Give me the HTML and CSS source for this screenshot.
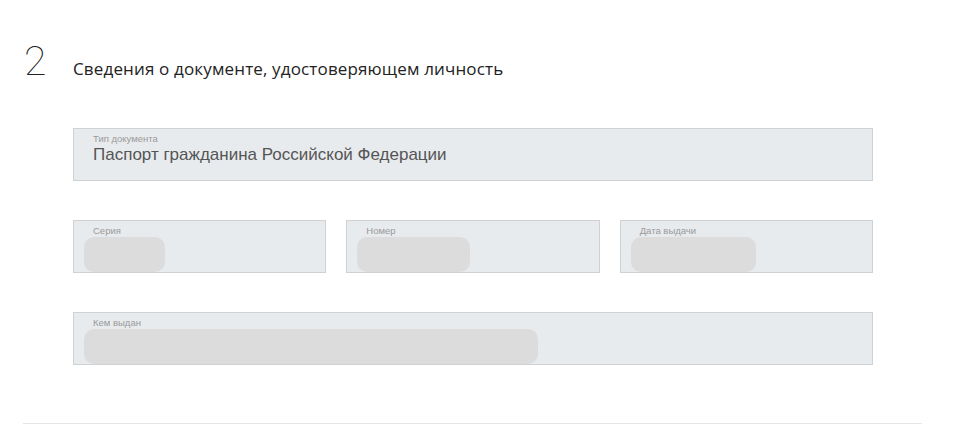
FILE: index.html
```html
<!DOCTYPE html>
<html lang="ru">
<head>
<meta charset="utf-8">
<link rel="stylesheet" href="styles.css">
</head>
<body>
<section class="step">
  <header class="step-head">
    <span class="step-num">2</span>
    <h2 class="step-title">Сведения о документе, удостоверяющем личность</h2>
  </header>
  <div class="form">
    <div class="field">
      <div class="field-label">Тип документа</div>
      <div class="field-value">Паспорт гражданина Российской Федерации</div>
    </div>
    <div class="row3">
      <div class="field">
        <div class="field-label">Серия</div>
        <div class="blob blob-s"></div>
      </div>
      <div class="field">
        <div class="field-label">Номер</div>
        <div class="blob blob-m"></div>
      </div>
      <div class="field">
        <div class="field-label">Дата выдачи</div>
        <div class="blob blob-l"></div>
      </div>
    </div>
    <div class="field">
      <div class="field-label">Кем выдан</div>
      <div class="blob blob-xl"></div>
    </div>
  </div>
  <div class="divider"></div>
</section>
</body>
</html>
```
FILE: styles.css
```css
html, body {
  margin: 0;
  padding: 0;
  background: #fff;
}
body {
  font-family: "Liberation Sans", Arial, sans-serif;
}
.step {
  padding: 40px 0 0 23px;
  width: 900px;
}
.step-head {
  display: flex;
  align-items: baseline;
  height: 42px;
}
.step-num {
  width: 50px;
  font-family: Roboto, "DejaVu Sans", sans-serif;
  font-weight: 100;
  font-size: 41px;
  line-height: 42px;
  color: #222;
  padding-left: 1px;
  box-sizing: border-box;
}
.step-title {
  margin: 0;
  font-family: "Open Sans", "Noto Sans", sans-serif;
  font-weight: 400;
  font-size: 17px;
  letter-spacing: 0.15px;
  color: #222;
}
.form {
  margin: 46px 0 0 50px;
  width: 800px;
  display: flex;
  flex-direction: column;
  gap: 39px;
}
.row3 {
  display: grid;
  grid-template-columns: 1fr 1fr 1fr;
  gap: 20px;
}
.field {
  height: 53px;
  box-sizing: border-box;
  background: #e8ebee;
  border: 1px solid #cfd1d3;
  padding: 4px 0 0 0;
}
.field-label {
  font-size: 9.5px;
  line-height: 12px;
  color: #999;
  padding-left: 19px;
}
.field-value {
  font-size: 17px;
  line-height: 20px;
  color: #555;
  padding-left: 19px;
}
.blob {
  height: 35px;
  margin-left: 10px;
  background: #dcdcdc;
  border-radius: 10px;
}
.blob-s { width: 81px; }
.blob-m { width: 113px; }
.blob-l { width: 125px; }
.blob-xl { width: 454px; }
.divider {
  margin-top: 58px;
  height: 1px;
  width: 899px;
  background: #e3e5e7;
}
```
